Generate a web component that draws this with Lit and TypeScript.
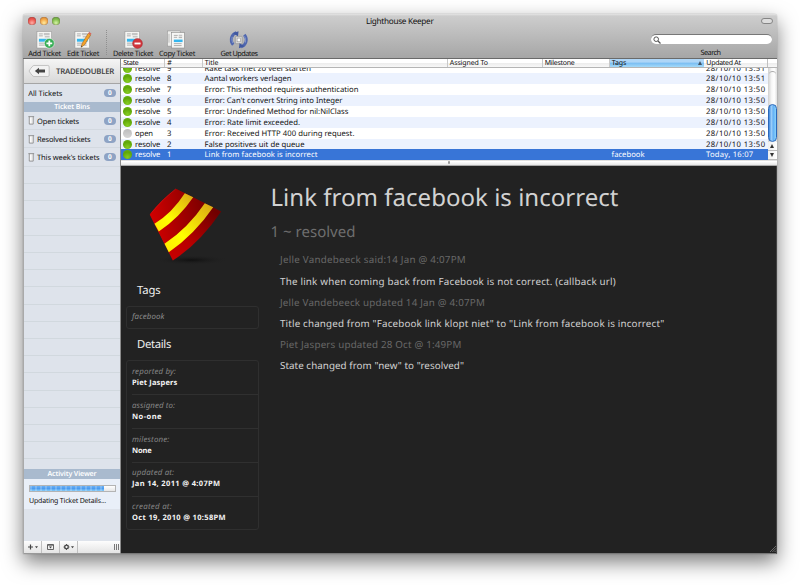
import { LitElement, html, css, svg, nothing } from "lit";
import { customElement, property } from "lit/decorators.js";

/** A line of text whose tracking is adjusted so that it takes the given width. */
@customElement("fit-text")
class FitText extends LitElement {
  @property() text = "";
  @property({ type: Number }) width = 0;

  static styles = css`
    :host { display: inline-block; white-space: pre; }
  `;

  render() {
    return html`<span>${this.text}</span>`;
  }

  firstUpdated() {
    const span = this.renderRoot.querySelector("span")!;
    const natural = span.getBoundingClientRect().width;
    if (this.width) {
      span.style.letterSpacing = `${(this.width - natural) / this.text.length}px`;
    }
  }
}

const fit = (text: string, width: number) => html`<fit-text .text=${text} .width=${width}></fit-text>`;

const page = svg`
  <rect x="1" y=".5" width="15" height="17" fill="#f6f6f4" stroke="#8f8f8f" stroke-width=".5"/>
  <path d="M3 3h4M3 5h4M3 12.5h10M3 14.5h10M9 6h5" stroke="#9a9a9a" stroke-width=".8"/>
  <rect x="8" y="2" width="6" height="2.4" fill="#c5c5c5"/>
  <rect x="3" y="8" width="11" height="3" fill="#35b6ee"/>`;

const icons = {
  add: svg`${page}
    <circle cx="13.7" cy="12.7" r="5.1" fill="#36ad54" stroke="#fff" stroke-width=".5"/>
    <path d="M13.7 9.7v6M10.7 12.7h6" stroke="#fff" stroke-width="1.8"/>`,
  edit: svg`${page}
    <path d="M7.2 16.8l1.3-4.2L14.6 2.4l2.6 1.6-6.4 10.3z" fill="#f5a22a" stroke="#8a5a1a" stroke-width=".5"/>
    <path d="M14.6 2.4l.9-1.4 2.5 1.5-.9 1.5z" fill="#d8665a"/>
    <path d="M7.2 16.8l.5-1.7 1.1.7z" fill="#333"/>`,
  remove: svg`${page}
    <circle cx="13.9" cy="12.8" r="5.1" fill="#d0343b" stroke="#9d2228" stroke-width=".4"/>
    <rect x="10.8" y="11.9" width="6.2" height="1.9" fill="#fff"/>`,
  copy: svg`
    <rect x="-.5" y="0" width="13" height="15.5" fill="#efefed" stroke="#8f8f8f" stroke-width=".5"/>
    <path d="M1 3v9" stroke="#bbb" stroke-width="1"/>
    <rect x="3.5" y="1.5" width="13.5" height="16" fill="#f7f7f5" stroke="#858585" stroke-width=".6"/>
    <path d="M6 4.5h4M6 6.5h3.4M6 13h8M6 15h8M11 6.8h3.5" stroke="#9a9a9a" stroke-width=".8"/>
    <rect x="11" y="3.8" width="3.6" height="1.8" fill="#c5c5c5"/>
    <rect x="6" y="8.8" width="9" height="2.6" fill="#35b6ee"/>`,
  update: svg`
    <rect x="5.5" y="5.5" width="7" height="7.5" rx=".6" fill="#d6d6d6" stroke="#8c8c8c" stroke-width=".6"/>
    <rect x="7.3" y="7.3" width="3.4" height="3.8" fill="#f8f8f8" stroke="#888" stroke-width=".5"/>
    <path d="M6.6 1.6C1.5 3.4-.6 9.500 3.300 14.200" fill="none" stroke="#5067ae" stroke-width="3"/>
    <path d="M3 2.200L8.800 .2 8.200 5.400z" fill="#4058a0"/>
    <path d="M11.400 16.400C16.500 14.600 18.600 8.500 14.700 3.800" fill="none" stroke="#5067ae" stroke-width="3"/>
    <path d="M15 15.800L9.200 17.800 9.800 12.600z" fill="#4058a0"/>
    <path d="M2.300 6C1.700 8.500 2 10.500 3 12.500M15.700 12c.6-2.500.3-4.500-.7-6.500" fill="none" stroke="#8ea1d4" stroke-width=".8"/>`,
};

const tools: { icon: keyof typeof icons; label: string; width: number; cls: string }[] = [
  { icon: "add", label: "Add Ticket", width: 32.7, cls: "t-add" },
  { icon: "edit", label: "Edit Ticket", width: 32, cls: "t-edit" },
  { icon: "remove", label: "Delete Ticket", width: 40, cls: "t-del" },
  { icon: "copy", label: "Copy Ticket", width: 36, cls: "t-copy" },
  { icon: "update", label: "Get Updates", width: 37, cls: "t-upd" },
];

const tickets = [
  { n: "9", title: "Rake task met zo veel starten", w: 106.5, at: "28/10/10 13:51" },
  { n: "8", title: "Aantal workers verlagen", w: 87, at: "28/10/10 13:51" },
  { n: "7", title: "Error: This method requires authentication", w: 154, at: "28/10/10 13:50" },
  { n: "6", title: "Error: Can't convert String into Integer", w: 138, at: "28/10/10 13:50" },
  { n: "5", title: "Error: Undefined Method for nil:NilClass", w: 144, at: "28/10/10 13:50" },
  { n: "4", title: "Error: Rate limit exceeded.", w: 95.5, at: "28/10/10 13:50" },
  { n: "3", title: "Error: Received HTTP 400 during request.", w: 150, at: "28/10/10 13:50", open: true },
  { n: "2", title: "False positives uit de queue", w: 100, at: "28/10/10 13:50" },
  { n: "1", title: "Link from facebook is incorrect", w: 113, at: "Today, 16:07", tag: "facebook", selected: true },
];

const bins = [
  { label: "Open tickets", width: 42 },
  { label: "Resolved tickets", width: 53.5 },
  { label: "This week's tickets", width: 62.5 },
];

const details = [
  { key: "reported by:", kw: 44, value: "Piet Jaspers", vw: 45.5 },
  { key: "assigned to:", kw: 43, value: "No-one", vw: 30 },
  { key: "milestone:", kw: 37.5, value: "None", vw: 19.5 },
  { key: "updated at:", kw: 42.3, value: "Jan 14, 2011 @ 4:07PM", vw: 88.5 },
  { key: "created at:", kw: 40, value: "Oct 19, 2010 @ 10:58PM", vw: 94 },
];

const history = [
  { meta: "Jelle Vandebeeck said:14 Jan @ 4:07PM", mw: 186, body: "The link when coming back from Facebook is not correct. (callback url)", bw: 336 },
  { meta: "Jelle Vandebeeck updated 14 Jan @ 4:07PM", mw: 205, body: 'Title changed from "Facebook link klopt niet" to "Link from facebook is incorrect"', bw: 384.5 },
  { meta: "Piet Jaspers updated 28 Oct @ 1:49PM", mw: 181.5, body: 'State changed from "new" to "resolved"', bw: 184 },
];

@customElement("app-root")
class AppRoot extends LitElement {
  static styles = css`
    :host {
      display: block;
      box-sizing: border-box;
      height: 585px;
      padding: 14px 23px 0;
      overflow: hidden;
      background: #fff;
      font: 7.5px/11px "Noto Sans", "Open Sans", sans-serif;
      color: #111;
      text-rendering: geometricPrecision;
    }
    * { box-sizing: border-box; }
    svg { display: block; overflow: visible; }
    .window {
      display: flex;
      flex-direction: column;
      width: 754px;
      height: 539.500px;
      border-radius: 3px 3px 0 0;
      box-shadow: 0 8px 20px rgba(0, 0, 0, 0.52), 0 0 1px rgba(0, 0, 0, 0.5);
    }
    .top {
      height: 45px;
      border-radius: 3px 3px 0 0;
      border-bottom: 1px solid #6a6a6a;
      background: linear-gradient(#e4e4e4, #cdcdcd 2px, #a6a6a6);
    }
    .titlebar { display: flex; align-items: center; height: 14px; padding: 0 4px 0 5px; }
    .lights { display: flex; gap: 4px; width: 361px; margin-right: -23px; }
    .light { width: 8px; height: 8px; border-radius: 50%; box-shadow: inset 0 0 1px rgba(60, 30, 30, 0.8); }
    .red { background: radial-gradient(circle at 50% 75%, #ffb0a8, #ee5a52 50%, #c2403a); }
    .amber { background: radial-gradient(circle at 50% 75%, #ffeca0, #f5ab4b 50%, #c97c30); }
    .green { background: radial-gradient(circle at 50% 75%, #d8f5a8, #86c050 50%, #5c963f); }
    .name { flex: 1; font-size: 8.200px; }
    .pill { width: 12px; height: 5.500px; border: 1px solid #858585; border-radius: 3px; background: #ddd; }
    .tools { display: flex; height: 30px; padding: 2px 5px 0; }
    .tool { display: flex; flex-direction: column; align-items: center; gap: 0; font-size: 7.300px; }
    .tool svg { width: 17.500px; height: 17.500px; margin-top: 0.5px; }
    .tool fit-text { margin-top: 0.8px; height: 10px; line-height: 10px; }
    .t-add { width: 33px; }
    .t-edit { width: 32px; margin-left: 6px; }
    .t-del { width: 40px; }
    .t-copy { width: 36px; margin-left: 6px; }
    .t-upd { width: 38px; margin-left: 25px; }
    .sep { width: 1px; height: 26px; margin: 0 6px 0 7px; background: repeating-linear-gradient(#8f8f8f 0 1px, transparent 1px 2px); }
    .find { display: flex; flex-direction: column; align-items: center; margin-left: auto; width: 121px; margin-right: 0.5px; font-size: 7.300px; }
    .field { display: flex; align-items: center; width: 121px; height: 12px; margin-top: 4px; padding-left: 2px; border-radius: 6px; background: #fff; border-top: 1px solid #777; }
    .field svg { width: 8px; height: 8px; }
    .find fit-text { margin: 4px 1px 0 0; height: 10px; line-height: 10px; }
    .body { display: flex; flex: 1; min-height: 0; }

    .side { display: flex; flex-direction: column; width: 98px; border-left: 1px solid #a9a9a9; border-right: 1px solid #8b8b8b; background: #dee3eb; }
    .project { display: flex; align-items: center; gap: 6px; height: 24.500px; padding-left: 4px; border-bottom: 1px solid #a5a5a5; background: linear-gradient(#f5f5f5, #d8d8d8); color: #444; font-size: 7.800px; font-weight: 600; }
    .project svg { width: 22px; height: 12px; margin-top: 1px; }
    .project fit-text { margin-top: 3px; }
    .entry { display: flex; align-items: center; height: 18.300px; padding: 1px 4.500px 0 4px; border-bottom: 1px solid #d3d9e0; }
    .entry.all { height: 18.500px; border: 0; padding-left: 4.300px; }
    .entry svg { width: 6.500px; height: 9px; margin-right: 2.500px; }
    .entry > fit-text { margin-top: 3px; }
    .count { margin-left: auto; width: 11.500px; height: 8px; border-radius: 4px; background: #8ea3c4; color: #fff; font-weight: 700; font-size: 6.500px; line-height: 8.500px; text-align: center; }
    .band { height: 9.700px; line-height: 12px; background: #a9bace; color: #fff; text-align: center; font-size: 7px; font-weight: 600; flex: none; }
    .empty { height: 302.500px; background: repeating-linear-gradient(#dee3eb 0 16.200px, #d1d8de 16.200px 17.200px); }
    .activity { height: 30px; padding: 6.500px 4.500px 0 5px; background: #e9eff8; font-size: 7px; }
    .bar { width: 86.500px; height: 6.500px; border: 0.5px solid #b4b4b4; background: linear-gradient(#fff, #e6e6e6); }
    .fill { height: 100%; background: repeating-linear-gradient(90deg, rgba(255, 255, 255, 0.2) 0 2px, transparent 2px 5px), linear-gradient(#6bb0f3, #4b9cf0 50%, #87ccf8); }
    .activity fit-text { margin-top: 4px; }
    .actions { display: flex; height: 12.500px; margin-top: auto; background: linear-gradient(#fdfdfd, #e4e4e4); border-bottom: 0.5px solid #999; }
    .action { display: flex; align-items: center; justify-content: center; width: 18px; padding-top: 0.5px; border-right: 1px solid #c0c0c0; }
    .grip { width: 5px; height: 6px; margin: 3px 1.500px 0 auto; background: repeating-linear-gradient(90deg, #777 0 1px, transparent 1px 2px); }

    .main { display: flex; flex-direction: column; width: 656px; }
    .row, .head { display: grid; grid-template-columns: 44px 37.500px 245px 95px 67px 94.500px 1fr; }
    .head { height: 9px; flex: none; line-height: 9px; font-size: 7px; border-bottom: 1px solid #b5b5b5; background: linear-gradient(#fff 45%, #ececec 50%, #f8f8f8); }
    .head > div { display: flex; height: 8px; padding-left: 2.300px; border-right: 1px solid #c9c9c9; }
    .head .sorted { background: linear-gradient(#aed6f7 40%, #79bdf2 50%, #a4daf9); border: 0; }
    .arrow { width: 0; height: 0; margin: 2px 2.500px 0 auto; border: 2px solid transparent; border-top: 0; border-bottom: 4px solid #456; }
    .head .last { border: 0; }
    .gap { margin: 0 9px 0 auto; width: 1px; height: 8px; background: #c0c0c0; }
    .list { display: flex; height: 92.300px; flex: none; }
    .rows { display: flex; flex-direction: column; justify-content: flex-end; width: 646.500px; overflow: hidden; }
    .row { height: 10.870px; flex: none; line-height: 13.500px; font-size: 7.700px; background: #fff; }
    .row:nth-child(even) { background: #ecf2fe; }
    .row.selected { background: #3875d7; color: #fff; }
    .row > div { padding-left: 2px; height: 10.870px; }
    .row > .state { display: flex; align-items: flex-start; gap: 3px; }
    .dot { width: 9px; height: 9px; margin-top: 1px; border-radius: 50%; background: radial-gradient(circle at 50% 80%, #86cc22, #5fa708 60%, #6fb51a); }
    .dot.open { background: linear-gradient(#bcbcbc, #d6d6d6); }
    .scroll { display: flex; flex-direction: column; width: 9.500px; background: linear-gradient(90deg, #cfcfcf, #f6f6f6 40%, #fff 70%, #e0e0e0); }
    .cap { height: 36px; margin: 3px 1px 0; border-top: 1px solid #aaa; border-radius: 5px 5px 0 0; }
    .thumb { height: 38px; margin: -3px 0.500px 0; border-radius: 4.500px; border: 1px solid #2b67b9; background: linear-gradient(90deg, #3b86de, #9bcdf8 35%, #64b0f4 60%, #88d2fc); }
    .step { display: flex; align-items: center; justify-content: center; flex: 1; background: linear-gradient(90deg, #eee, #fff); border-bottom: 0.5px solid #bbb; }
    .step svg { width: 4px; height: 4px; }
    .split { display: flex; align-items: center; justify-content: center; height: 5.700px; flex: none; background: linear-gradient(#d0d0d0, #fff 30%, #e6e6e6); border-bottom: 1px solid #aaa; }
    .knob { width: 2.500px; height: 2.500px; border-radius: 50%; background: #999; }
    .ticket { display: flex; flex: 1; min-height: 0; background: #222; position: relative; border-right: 1px solid #444; border-bottom: 0.5px solid #777; }
    .info { width: 137.500px; margin-left: 5px; color: #eee; }
    .logo { width: 132px; height: 108px; margin-bottom: 9.200px; }
    .info h2 { margin: 0; padding-left: 11px; font-size: 11.300px; font-weight: 400; line-height: 16px; height: 16px; }
    .tags { height: 23.500px; margin: 6.500px 0 8.300px; padding: 5.500px 0 0 5px; border: 1px solid #2f2f2f; border-radius: 3px; width: 133px; font-style: italic; color: #8b8b8b; line-height: 11px; font-size: 7.900px; }
    .facts { width: 133px; height: 169.500px; margin-top: 7px; padding-left: 5px; border: 1px solid #2f2f2f; border-radius: 3px; }
    .fact { height: 33.800px; padding-top: 5.500px; border-bottom: 1px solid #303030; font-size: 7.900px; line-height: 11px; }
    .fact:last-child { border: 0; }
    .fact fit-text { display: block; }
    .key { font-style: italic; color: #858585; }
    .value { font-weight: 700; color: #f4f4f4; font-size: 7.500px; }
    .story { margin-left: 7px; padding-top: 12.500px; }
    .story h1 { margin: 0; font-size: 24px; font-weight: 400; line-height: 40px; height: 44px; color: #d2d2d2; }
    .status { height: 27px; line-height: 20px; font-size: 15px; color: #6e6e6e; }
    .log { padding-left: 9.500px; font-size: 9.800px; line-height: 21.200px; }
    .log fit-text { display: block; height: 21.200px; }
    .meta { color: #686868; }
    .text { color: #d2d2d2; }
    .resize { position: absolute; right: 0; bottom: 1px; width: 6px; height: 6px; }
  `;

  private head(label: string, width: number, cls = "") {
    return html`<div class=${cls}>${fit(label, width)}${cls === "sorted" ? html`<span class="arrow"></span>` : nothing}</div>`;
  }

  private logo() {
    return html`<svg class="logo" viewBox="125.500 165.500 132 108">
      <defs>
        <linearGradient id="red" x1="0" y1="0.3" x2="1" y2="0.1">
          <stop offset="0" stop-color="#cf0000" /><stop offset=".45" stop-color="#a80000" /><stop offset="1" stop-color="#780000" />
        </linearGradient>
        <linearGradient id="low" x1="0" y1="1" x2=".8" y2=".2">
          <stop offset="0" stop-color="#d40000" /><stop offset=".5" stop-color="#b80000" /><stop offset="1" stop-color="#700000" />
        </linearGradient>
        <linearGradient id="gold" x1="0" y1="1" x2="1" y2="0">
          <stop offset="0" stop-color="#ffe800" /><stop offset=".35" stop-color="#ffff00" /><stop offset="1" stop-color="#d9a416" />
        </linearGradient>
        <radialGradient id="ground"><stop offset="0" stop-color="#101010" /><stop offset="1" stop-color="#222" stop-opacity="0" /></radialGradient>
      </defs>
      <ellipse cx="191" cy="259.500" rx="38" ry="5" fill="url(#ground)" />
      <path d="M149.300 214Q161 199 175.300 188.300L220.700 211Q199 243 172.300 260z" fill="url(#low)" />
      <path d="M149.300 214Q161 199 175.300 188.300L204.300 202.700Q186 230 164 243.300z" fill="url(#red)" />
      <path d="M184.300 192.700L192.700 196.700Q179 217 158.300 231L154 223.300Q172 212 184.300 192.700z" fill="url(#gold)" />
      <path d="M204.300 202.700L212.700 206.700Q194 234 168.300 251.700L164 243.300Q188 227 204.300 202.700z" fill="url(#gold)" />
      <path d="M175.300 188.300Q163 198 151 212" fill="none" stroke="#e03030" stroke-width=".6" opacity=".5" />
    </svg>`;
  }

  render() {
    return html`
      <div class="window">
        <div class="top">
          <div class="titlebar">
            <div class="lights"><i class="light red"></i><i class="light amber"></i><i class="light green"></i></div>
            <div class="name">${fit("Lighthouse Keeper", 67.500)}</div>
            <div class="pill"></div>
          </div>
          <div class="tools">
            ${tools.map((t, i) => html`
              ${i === 2 ? html`<div class="sep"></div>` : nothing}
              <div class="tool ${t.cls}"><svg viewBox="0 0 18 18">${icons[t.icon]}</svg>${fit(t.label, t.width)}</div>`)}
            <div class="find">
              <div class="field"><svg viewBox="0 0 8 8"><circle cx="3.200" cy="3.200" r="2.300" fill="none" stroke="#555" stroke-width="1" /><path d="M5 5l2.500 2.500" stroke="#555" stroke-width="1.300" /></svg></div>
              ${fit("Search", 20)}
            </div>
          </div>
        </div>
        <div class="body">
          <div class="side">
            <div class="project">
              <svg viewBox="0 0 23 13"><path d="M6 .5H21Q22.500 .5 22.500 2V11Q22.500 12.500 21 12.500H6Q4.500 12.500 .7 6.500 4.500 .5 6 .5z" fill="#f2f2f2" stroke="#aaa" stroke-width=".7" /><path d="M7 6.500l4.500-3.500v2H18v3h-6.500v2z" fill="#444" /></svg>
              ${fit("TRADEDOUBLER", 58)}
            </div>
            <div class="entry all">${fit("All Tickets", 34)}<span class="count">0</span></div>
            <div class="band">${fit("Ticket Bins", 35.500)}</div>
            ${bins.map((b) => html`<div class="entry">
              <svg viewBox="0 0 7 10"><path d="M.3 .7h6.400M1.300 .7V9h4.400V.7" fill="#eee" stroke="#858585" stroke-width=".9" /><path d="M2.600 2v6" stroke="#fff" stroke-width=".8" /></svg>
              ${fit(b.label, b.width)}<span class="count">0</span></div>`)}
            <div class="empty"></div>
            <div class="band">${fit("Activity Viewer", 49)}</div>
            <div class="activity">
              <div class="bar"><div class="fill" style="width:87%"></div></div>
              ${fit("Updating Ticket Details...", 77)}
            </div>
            <div class="actions">
              <div class="action"><svg width="12" height="6" viewBox="0 0 12 6"><path d="M1 3h5M3.500 .5v5" stroke="#444" stroke-width="1.200" /><path d="M8 2.200h3L9.500 4.200z" fill="#444" /></svg></div>
              <div class="action"><svg width="7" height="6" viewBox="0 0 7 6"><path d="M.5 .5h6v5h-6zM.5 1.200h6" fill="none" stroke="#555" stroke-width=".9" /><path d="M2 2.400h3L3.500 4.600z" fill="#444" /></svg></div>
              <div class="action"><svg width="12" height="6" viewBox="0 0 12 6"><circle cx="3.500" cy="3" r="1.800" fill="none" stroke="#444" stroke-width="1.300" /><path d="M3.500 0v1M3.500 5v1M.5 3h1M5.500 3h1M1.400 .9l.7.7M4.900 4.400l.7.7M5.600 .9l-.7.7M2.100 4.400l-.7.7" stroke="#444" stroke-width=".9" /><path d="M8 2.200h3L9.500 4.200z" fill="#444" /></svg></div>
              <div class="grip"></div>
            </div>
          </div>
          <div class="main">
            <div class="head">
              ${this.head("State", 15)}${this.head("#", 4)}${this.head("Title", 13.500)}${this.head("Assigned To", 38)}
              ${this.head("Milestone", 29.500)}${this.head("Tags", 14.500, "sorted")}
              <div class="last">${fit("Updated At", 34.500)}<span class="gap"></span></div>
            </div>
            <div class="list">
              <div class="rows">
                ${tickets.map((t) => html`<div class="row ${t.selected ? "selected" : ""}">
                  <div class="state"><i class="dot ${t.open ? "open" : ""}"></i>${t.open ? fit("open", 18) : fit("resolve", 25.300)}</div>
                  <div>${fit(t.n, 4.500)}</div>
                  <div>${fit(t.title, t.w)}</div>
                  <div></div><div></div>
                  <div>${t.tag ? fit(t.tag, 33) : nothing}</div>
                  <div>${fit(t.at, t.selected ? 47.500 : 59.500)}</div>
                </div>`)}
              </div>
              <div class="scroll">
                <div class="cap"></div><div class="thumb"></div>
                <div class="step"><svg viewBox="0 0 4 4"><path d="M2 0l2 4H0z" fill="#333" /></svg></div>
                <div class="step"><svg viewBox="0 0 4 4"><path d="M2 4L0 0h4z" fill="#333" /></svg></div>
              </div>
            </div>
            <div class="split"><i class="knob"></i></div>
            <div class="ticket">
              <div class="info">
                ${this.logo()}
                <h2>${fit("Tags", 23.500)}</h2>
                <div class="tags">${fit("facebook", 32.500)}</div>
                <h2>${fit("Details", 34)}</h2>
                <div class="facts">
                  ${details.map((d) => html`<div class="fact">
                    <div class="key">${fit(d.key, d.kw)}</div><div class="value">${fit(d.value, d.vw)}</div></div>`)}
                </div>
              </div>
              <div class="story">
                <h1>${fit("Link from facebook is incorrect", 348)}</h1>
                <div class="status">${fit("1 ~ resolved", 85)}</div>
                <div class="log">
                  ${history.map((h) => html`<div class="meta">${fit(h.meta, h.mw)}</div><div class="text">${fit(h.body, h.bw)}</div>`)}
                </div>
              </div>
              <svg class="resize" viewBox="0 0 6 6"><path d="M0 6L6 0M2.300 6L6 2.300M4.600 6L6 4.600" stroke="#8a8a8a" stroke-width=".7" /></svg>
            </div>
          </div>
        </div>
      </div>`;
  }
}
